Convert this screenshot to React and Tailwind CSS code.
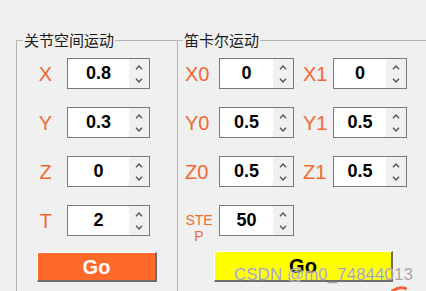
import React from "react";

function Chevrons() {
  return (
    <div className="flex w-[20px] flex-col items-center justify-center gap-[8px] self-stretch bg-[#f0f0f0]">
      <svg width="8" height="5" viewBox="0 0 8 5">
        <polyline points="1,4.2 4,1 7,4.2" fill="none" stroke="#555" strokeWidth="1.4" />
      </svg>
      <svg width="8" height="5" viewBox="0 0 8 5">
        <polyline points="1,0.8 4,4 7,0.8" fill="none" stroke="#555" strokeWidth="1.4" />
      </svg>
    </div>
  );
}

function Spin({ value, w }) {
  return (
    <div className={`flex h-[31px] shrink-0 ${w} border border-[#7a7a7a] bg-white`}>
      <div className="flex flex-1 items-center justify-center text-[18px] font-bold text-black">
        {value}
      </div>
      <Chevrons />
    </div>
  );
}

function Label({ children, w }) {
  return (
    <span className={`${w} shrink-0 text-[20px] leading-[30px] text-[#f26a33]`}>{children}</span>
  );
}

export default function App() {
  return (
    <div
      className="relative h-[291px] w-[426px] overflow-hidden bg-[#f0f0f0] pl-[16px] pt-[30px]"
      style={{ fontFamily: '"Liberation Sans", Arial, sans-serif' }}
    >
      <div className="flex items-start">
        <fieldset className="h-[280px] w-[161px] shrink-0 border-t border-l border-[#b4b4b4] pt-[8px]">
          <legend
            className="ml-[6px] px-[1px] text-[15px] leading-[20px] text-[#1a1a1a]"
            style={{ fontFamily: '"Noto Sans CJK SC", sans-serif' }}
          >
            关节空间运动
          </legend>
          <div className="flex flex-col gap-[18px] pl-[14px]">
            {[
              ["X", "0.8"],
              ["Y", "0.3"],
              ["Z", "0"],
              ["T", "2"],
            ].map(([l, v]) => (
              <div key={l} className="flex items-center">
                <Label w="w-[29px] text-center">{l}</Label>
                <div className="ml-[7px]">
                  <Spin value={v} w="w-[83px]" />
                </div>
              </div>
            ))}
          </div>
          <button className="ml-[20px] mt-[16px] flex h-[30px] w-[120px] items-center justify-center border-t border-l border-b-2 border-r-2 border-t-white border-l-white border-b-[#6b6b6b] border-r-[#6b6b6b] bg-[#ff6a2a] text-[20px] font-bold text-white">
            Go
          </button>
        </fieldset>

        <fieldset className="h-[280px] w-[260px] shrink-0 border-t border-l border-[#b4b4b4] pt-[8px]">
          <legend
            className="ml-[5px] px-[1px] text-[15px] leading-[20px] text-[#1a1a1a]"
            style={{ fontFamily: '"Noto Sans CJK SC", sans-serif' }}
          >
            笛卡尔运动
          </legend>
          <div className="flex flex-col gap-[18px] pl-[7px]">
            {[
              ["X0", "0", "X1", "0"],
              ["Y0", "0.5", "Y1", "0.5"],
              ["Z0", "0.5", "Z1", "0.5"],
            ].map(([l0, v0, l1, v1]) => (
              <div key={l0} className="flex items-center">
                <Label w="w-[34px]">{l0}</Label>
                <Spin value={v0} w="w-[75px]" />
                <span className="ml-[9px]" />
                <Label w="w-[30px]">{l1}</Label>
                <Spin value={v1} w="w-[74px]" />
              </div>
            ))}
            <div className="flex h-[31px] items-start">
              <span className="mt-[7px] w-[28px] shrink-0 break-all text-center text-[14px] leading-[16px] text-[#f26a33]">
                STEP
              </span>
              <div className="ml-[6px]">
                <Spin value="50" w="w-[75px]" />
              </div>
            </div>
          </div>
          <button className="ml-[36px] mt-[15px] flex h-[31px] w-[179px] items-center justify-center border-t border-l border-b-2 border-r-2 border-t-white border-l-white border-b-[#6b6b6b] border-r-[#6b6b6b] bg-[#ffff00] text-[20px] font-bold text-black">
            Go
          </button>
        </fieldset>
      </div>

      <span
        className="absolute left-[234px] top-[266px] whitespace-nowrap text-[17px] leading-[17px] text-[#9a9a9a]/90"
        style={{ textShadow: "0 0 1px #ffffff" }}
      >
        CSDN @m0_74844013
      </span>
      <svg className="absolute bottom-0 right-[19px]" width="16" height="5" viewBox="0 0 16 5">
        <path d="M1.5 5 Q8 0 14.5 2.5" fill="none" stroke="#f4643a" strokeWidth="3" strokeLinecap="round" />
      </svg>
    </div>
  );
}
